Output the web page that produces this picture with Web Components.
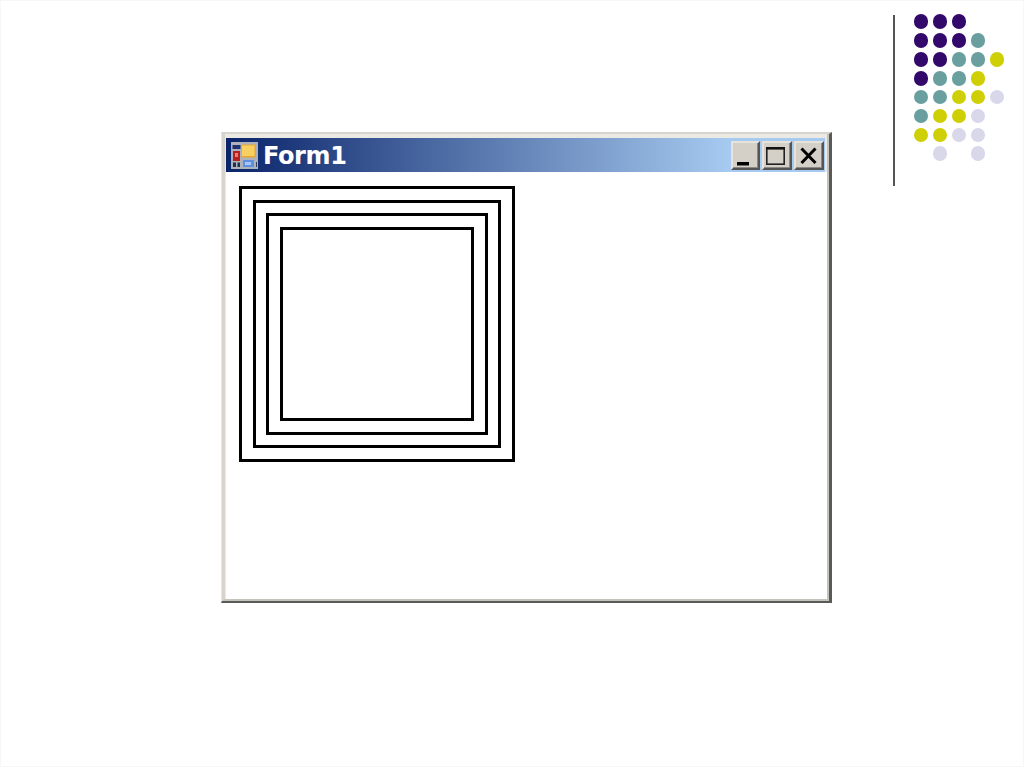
<!DOCTYPE html>
<html><head><meta charset="utf-8"><title>Form1</title>
<style>html,body{margin:0;padding:0;background:#fff;height:100%;overflow:hidden}</style></head>
<body>
<slide-page>
  <dot-pattern></dot-pattern>
  <form-window title-text="Form1">
    <nested-squares></nested-squares>
  </form-window>
</slide-page>
<script>
customElements.define('slide-page',class extends HTMLElement{constructor(){super();this.attachShadow({mode:'open'}).innerHTML=`<style>
:host{display:block;position:relative;width:1024px;height:767px;box-sizing:border-box;background:#fff;border:1px solid #f7f7f7;overflow:hidden}
.rule{position:absolute;left:891.5px;top:14px;width:2px;height:171px;background:#555}
::slotted(dot-pattern){position:absolute;left:912.75px;top:13.45px}
::slotted(form-window){position:absolute;left:220px;top:131px}
</style><div class="rule"></div><slot></slot>`}});

customElements.define('dot-pattern',class extends HTMLElement{constructor(){super();
const P='#33086b',T='#6a9fa0',Y='#cfcf05',L='#d8d8ea',_=null;
const rows=[[P,P,P,_,_],[P,P,P,T,_],[P,P,T,T,Y],[P,T,T,Y,_],[T,T,Y,Y,L],[T,Y,Y,L,_],[Y,Y,L,L,_],[_,L,_,L,_]];
const dots=rows.flat().map(c=>`<i${c?` style="background:${c}"`:''}></i>`).join('');
this.attachShadow({mode:'open'}).innerHTML=`<style>
:host{display:grid;grid-template-columns:repeat(5,14.5px);grid-auto-rows:14.5px;column-gap:4.5px;row-gap:4.36px}
i{display:block;width:14.5px;height:14.5px;border-radius:50%}
</style>${dots}`}});

customElements.define('form-window',class extends HTMLElement{constructor(){super();
this.attachShadow({mode:'open'}).innerHTML=`<style>
:host{display:block;box-sizing:border-box;width:611px;height:471px;
 border-style:solid;border-width:2px 3px 2px 1px;border-color:#d8d4cd #5a5a5a #5a5a5a #e8e6e1;font-family:"DejaVu Sans",sans-serif}
.frame{display:flex;flex-direction:column;height:100%;box-sizing:border-box;background:#ebe9e4;
 border-style:solid;border-width:0 2px 2px 3px;border-color:#c4c4bc #c4c4bc #c4c4bc #d8d4cd;padding:4px 0 0 1px}
.bar{flex:none;height:34px;margin-right:2px;display:flex;align-items:center;background:linear-gradient(90deg,#0a246a,#a6caf0 84%);padding:0 1px 0 5px;gap:5px}
.title{flex:1;color:#fff;font-weight:700;font-size:24px;letter-spacing:-.4px;line-height:32px;padding-top:2px;white-space:nowrap}
.icon{flex:none;width:27px;height:27px;display:block}
.btns{display:flex;gap:2px}
.btn{box-sizing:border-box;width:30px;height:29px;background:#d4d0c8;border:2px solid;border-color:#e6e3dd #555 #555 #e6e3dd;box-shadow:inset -1px -1px 0 #8c8a84}
.btn.first{width:29px}
.btn svg{display:block}
.client{flex:1;background:#fff;padding:14px 0 0 12px;min-height:0}
</style><div class="frame">
<div class="bar">
<svg class="icon" viewBox="0 0 27 27"><rect width="27" height="27" fill="#aeb2ba"/><rect x="1.5" y="3" width="8" height="4" fill="#1f3170"/><rect x="10" y="2.5" width="15" height="13" fill="#e8a830"/><rect x="11" y="3.5" width="12.5" height="10.5" fill="#f6d060"/><rect x="2" y="9" width="7" height="10" fill="#b82020"/><rect x="4" y="11" width="3" height="4" fill="#e88080"/><rect x="2" y="20.5" width="3" height="4.5" fill="#1f2f50"/><rect x="6.5" y="20.5" width="2.5" height="4.5" fill="#1f2f50"/><rect x="12" y="18" width="11" height="7" fill="#5f8fe0"/><rect x="14" y="20" width="6" height="3" fill="#a8c8f4"/><rect x="25" y="20" width="1" height="5" fill="#33405c"/></svg>
<div class="title">${this.getAttribute('title-text')||''}</div>
<div class="btns">
<div class="btn first"><svg width="25" height="25" viewBox="0 0 25 25"><rect x="4" y="19" width="12" height="3.5" fill="#000"/></svg></div>
<div class="btn"><svg width="26" height="25" viewBox="0 0 26 25"><rect x="2.8" y="4.8" width="17.4" height="16.4" fill="none" stroke="#222" stroke-width="1.6"/><rect x="2" y="4" width="19" height="2.6" fill="#111"/></svg></div>
<div class="btn"><svg width="26" height="25" viewBox="0 0 26 25"><path d="M5.5 5.5L19.5 20M19.5 5.5L5.5 20" fill="none" stroke="#000" stroke-width="3"/></svg></div>
</div></div>
<div class="client"><slot></slot></div></div>`}});

customElements.define('nested-squares',class extends HTMLElement{constructor(){super();
this.attachShadow({mode:'open'}).innerHTML=`<style>
:host{display:block;width:276px;height:276px;margin-left:1px}
div{box-sizing:border-box;width:100%;height:100%;border:3px solid #000;padding:10.67px}
div.last{padding:0}
</style><div><div><div><div class="last"></div></div></div></div>`}});
</script>
</body></html>
